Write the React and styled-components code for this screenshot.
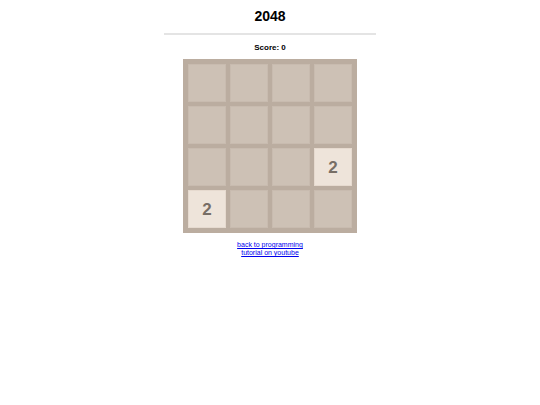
import { useState } from 'react';
import styled, { createGlobalStyle } from 'styled-components';

const START_BOARD = [
  [0, 0, 0, 0],
  [0, 0, 0, 0],
  [0, 0, 0, 2],
  [2, 0, 0, 0],
];

const App = () => {
  const [board] = useState(START_BOARD);
  const [score] = useState(0);

  return (
    <>
      <GlobalStyle />
      <Layout>
        <Title>2048</Title>
        <Divider />
        <Score>Score: {score}</Score>
        <Board>
          {board.flat().map((num, i) => (
            <Tile key={i} $value={num}>
              {num > 0 && num}
            </Tile>
          ))}
        </Board>
        <Links>
          <Link href='#programming'>back to programming</Link>
          <Link href='#tutorial'>tutorial on youtube</Link>
        </Links>
      </Layout>
    </>
  );
};

const GlobalStyle = createGlobalStyle`
  body {
    margin: 0;
    background-color: white;
    font-family: 'Liberation Sans', Arial, Helvetica, sans-serif;
    color: black;
  }
`;

const Layout = styled.main`
  display: flex;
  flex-direction: column;
  align-items: center;
  padding: 8px;
  text-align: center;
`;

const Title = styled.h1`
  margin: 0;
  font-size: 14px;
  line-height: 16px;
`;

const Divider = styled.hr`
  width: 100%;
  max-width: 212px;
  height: 2px;
  margin: 9px 0 8px;
  border: none;
  background-color: #e4e4e4;
`;

const Score = styled.h2`
  margin: 0 0 7px;
  font-size: 8px;
  line-height: 9px;
`;

const Board = styled.div`
  display: grid;
  grid-template-columns: repeat(4, 38px);
  grid-auto-rows: 38px;
  gap: 4px;
  padding: 5px;
  background-color: #bbada0;
`;

const Tile = styled.div`
  display: flex;
  justify-content: center;
  align-items: center;
  box-sizing: border-box;
  padding-top: 2px;
  border: 1px solid ${(props) => (props.$value ? '#e6dacf' : '#c8bbaf')};
  background-color: ${(props) => (props.$value ? '#eee4da' : '#cdc1b5')};
  font-size: 17px;
  line-height: 20px;
  font-weight: bold;
  color: #776e65;
`;

const Links = styled.nav`
  display: flex;
  flex-direction: column;
  align-items: center;
  margin-top: 8px;
`;

const Link = styled.a`
  font-size: 7px;
  line-height: 8px;
  color: #0000ee;
`;

export default App;
